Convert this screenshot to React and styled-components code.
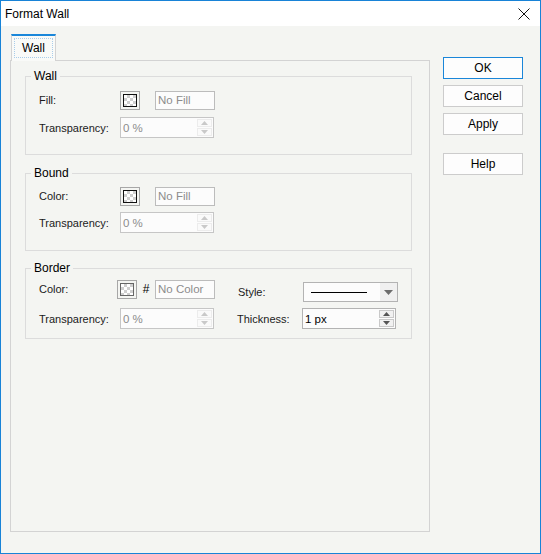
import React from 'react';
import styled, { createGlobalStyle } from 'styled-components';

const Global = createGlobalStyle`
  html, body {
    margin: 0;
    padding: 0;
    background: #f4f5f2;
  }
  * {
    box-sizing: border-box;
  }
`;

const Window = styled.div`
  width: 541px;
  height: 554px;
  border: 1px solid #1883d7;
  background: #f4f5f2;
  display: flex;
  flex-direction: column;
  font-family: "Liberation Sans", Arial, sans-serif;
  font-size: 11px;
  color: #1b1b1b;
`;

const TitleBar = styled.div`
  height: 25px;
  background: #ffffff;
  display: flex;
  align-items: center;
  justify-content: space-between;
  padding: 0 10px 0 4px;
  font-size: 12px;
  color: #000;
`;

const Content = styled.div`
  display: flex;
  padding: 8px 0 0 9px;
`;

const Main = styled.div`
  width: 420px;
  display: flex;
  flex-direction: column;
`;

const TabStrip = styled.div`
  height: 26px;
  display: flex;
  padding-left: 1px;
`;

const Tab = styled.div`
  position: relative;
  z-index: 1;
  width: 45px;
  height: 27px;
  margin-bottom: -1px;
  border: 1px solid #d3d3d3;
  border-top: 2px solid #1a87da;
  border-bottom: none;
  background: #f9faf8;
  padding: 2px 2px 3px;
`;

const TabFocus = styled.div`
  height: 100%;
  border: 1px dotted #a9cdea;
  display: flex;
  align-items: center;
  justify-content: center;
  font-size: 12px;
  color: #000;
`;

const Panel = styled.div`
  height: 472px;
  border: 1px solid #d3d3d3;
  padding: 8px 17px 0 14px;
  display: flex;
  flex-direction: column;
`;

const Group = styled.fieldset`
  margin: 0 0 ${p => p.$after || 0}px;
  border: 1px solid #dcdcdc;
  padding: ${p => p.$top}px 0 ${p => p.$bottom}px 13px;
  min-inline-size: 0;
  display: flex;
  flex-direction: column;
  gap: ${p => p.$gap}px;
`;

const Legend = styled.legend`
  margin-left: -8px;
  padding: 0 3px;
  font-size: 12px;
  line-height: 14px;
  color: #000;
`;

const Row = styled.div`
  display: flex;
  align-items: ${p => p.$align || 'center'};
  height: ${p => p.$h || 20}px;
`;

const Side = styled.div`
  display: flex;
  align-items: center;
  height: 20px;
  margin-left: ${p => p.$ml || 0}px;
  align-self: ${p => p.$self || 'auto'};
`;

const Label = styled.div`
  width: ${p => p.$w}px;
  margin-left: ${p => p.$ml || 0}px;
  flex: none;
`;

const Swatch = styled.div`
  width: 20px;
  height: 19px;
  border: 1px solid #a7a7a7;
  padding: 2px;
  flex: none;
`;

const Checker = styled.div`
  width: 100%;
  height: 100%;
  border: 1px solid ${p => p.$edge};
  background: conic-gradient(#cfcfcf 25%, #ffffff 0 50%, #cfcfcf 0 75%, #ffffff 0) 0 0 / 6px 6px;
`;

const Hash = styled.span`
  width: 18px;
  text-align: center;
  font-size: 12px;
  color: #000;
  flex: none;
`;

const TextBox = styled.div`
  width: ${p => p.$w}px;
  height: ${p => p.$h || 19}px;
  margin-left: ${p => p.$ml || 0}px;
  border: 1px solid #bcbcbc;
  background: #fcfcfc;
  color: ${p => (p.$disabled ? '#8c8c8c' : '#000')};
  font-size: 11.5px;
  display: flex;
  align-items: center;
  padding-left: 2px;
  flex: none;
`;

const Spin = styled.div`
  width: 94px;
  height: 21px;
  border: 1px solid ${p => (p.$disabled ? '#c6c6c6' : '#b3b3b3')};
  background: #fcfcfc;
  display: flex;
  align-items: stretch;
  flex: none;
`;

const SpinText = styled.div`
  flex: 1;
  display: flex;
  align-items: center;
  padding-left: 2px;
  font-size: 11.5px;
  color: ${p => (p.$disabled ? '#8c8c8c' : '#000')};
`;

const SpinButtons = styled.div`
  width: 16px;
  padding: 1px 1px 1px 0;
  display: flex;
  flex-direction: column;
  gap: 1px;
`;

const SpinButton = styled.div`
  flex: 1;
  display: flex;
  align-items: center;
  justify-content: center;
  border: 1px solid ${p => (p.$disabled ? '#ececec' : '#c9c9c9')};
  background: ${p => (p.$disabled ? '#fafafa' : '#f1f1f1')};
`;

const Combo = styled.div`
  width: 95px;
  height: 20px;
  border: 1px solid #b3b3b3;
  background: #fcfcfc;
  display: flex;
  align-items: stretch;
  flex: none;
`;

const ComboValue = styled.div`
  flex: 1;
  display: flex;
  align-items: center;
  padding-left: 7px;
`;

const ComboLine = styled.div`
  width: 56px;
  height: 1px;
  background: #000;
`;

const ComboArrow = styled.div`
  width: 17px;
  background: #f0f0f0;
  display: flex;
  align-items: center;
  justify-content: center;
`;

const Buttons = styled.div`
  margin-left: 13px;
  padding-top: 23px;
  width: 80px;
  display: flex;
  flex-direction: column;
  gap: 6px;
`;

const Button = styled.div`
  height: 22px;
  margin-top: ${p => p.$mt || 0}px;
  border: 1px solid ${p => (p.$primary ? '#1a86d9' : '#cccccc')};
  background: #fdfdfd;
  display: flex;
  align-items: center;
  justify-content: center;
  font-size: 12px;
  color: #000;
`;

function Arrow({ up, color }) {
  return (
    <svg width="7" height="4" viewBox="0 0 7 4">
      <path d={up ? 'M0 4 L3.5 0 L7 4 Z' : 'M0 0 L3.5 4 L7 0 Z'} fill={color} />
    </svg>
  );
}

function Spinner({ value, disabled }) {
  const c = disabled ? '#c9c9c9' : '#555';
  return (
    <Spin $disabled={disabled}>
      <SpinText $disabled={disabled}>{value}</SpinText>
      <SpinButtons>
        <SpinButton $disabled={disabled}><Arrow up color={c} /></SpinButton>
        <SpinButton $disabled={disabled}><Arrow color={c} /></SpinButton>
      </SpinButtons>
    </Spin>
  );
}

function ColorSwatch({ edge = '#111' }) {
  return (
    <Swatch>
      <Checker $edge={edge} />
    </Swatch>
  );
}

export default function App() {
  return (
    <>
      <Global />
      <Window>
        <TitleBar>
          <span>Format Wall</span>
          <svg width="12" height="12" viewBox="0 0 12 12">
            <path d="M0.5 0.5 L11.5 11.5 M11.5 0.5 L0.5 11.5" stroke="#111" strokeWidth="1" />
          </svg>
        </TitleBar>
        <Content>
          <Main>
            <TabStrip>
              <Tab>
                <TabFocus>Wall</TabFocus>
              </Tab>
            </TabStrip>
            <Panel>
              <Group $top={7} $bottom={16} $gap={7} $after={11}>
                <Legend>Wall</Legend>
                <Row>
                  <Label $w={81}>Fill:</Label>
                  <ColorSwatch />
                  <TextBox $w={60} $ml={15} $disabled>No Fill</TextBox>
                </Row>
                <Row $h={21}>
                  <Label $w={81}>Transparency:</Label>
                  <Spinner value="0 %" disabled />
                </Row>
              </Group>

              <Group $top={6} $bottom={17} $gap={6} $after={10}>
                <Legend>Bound</Legend>
                <Row>
                  <Label $w={81}>Color:</Label>
                  <ColorSwatch />
                  <TextBox $w={60} $ml={15} $disabled>No Fill</TextBox>
                </Row>
                <Row $h={21}>
                  <Label $w={81}>Transparency:</Label>
                  <Spinner value="0 %" disabled />
                </Row>
              </Group>

              <Group $top={4} $bottom={9} $gap={6}>
                <Legend>Border</Legend>
                <Row $h={23} $align="flex-start">
                  <Side>
                    <Label $w={78}>Color:</Label>
                    <ColorSwatch edge="#666" />
                    <Hash>#</Hash>
                    <TextBox $w={60} $disabled>No Color</TextBox>
                  </Side>
                  <Side $ml={23} $self="flex-end">
                    <Label $w={65}>Style:</Label>
                    <Combo>
                      <ComboValue><ComboLine /></ComboValue>
                      <ComboArrow>
                        <svg width="9" height="5" viewBox="0 0 9 5">
                          <path d="M0 0 L4.5 5 L9 0 Z" fill="#6d6d6d" />
                        </svg>
                      </ComboArrow>
                    </Combo>
                  </Side>
                </Row>
                <Row $h={21}>
                  <Label $w={81}>Transparency:</Label>
                  <Spinner value="0 %" disabled />
                  <Label $w={65} $ml={23}>Thickness:</Label>
                  <Spinner value="1 px" />
                </Row>
              </Group>
            </Panel>
          </Main>
          <Buttons>
            <Button $primary>OK</Button>
            <Button>Cancel</Button>
            <Button>Apply</Button>
            <Button $mt={12}>Help</Button>
          </Buttons>
        </Content>
      </Window>
    </>
  );
}
